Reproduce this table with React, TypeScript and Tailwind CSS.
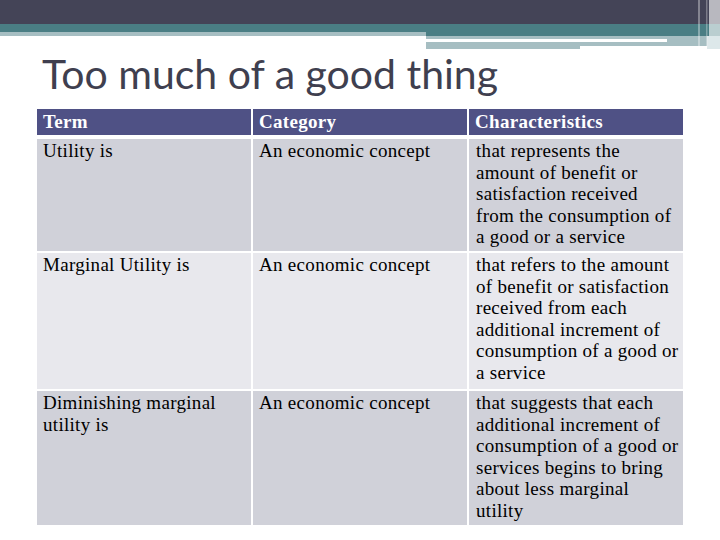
const rows = [
  {
    term: "Utility is",
    category: "An economic concept",
    lines: [
      "that represents the",
      "amount of benefit or",
      "satisfaction received",
      "from the consumption of",
      "a good or a service",
    ],
    bg: "bg-[#d0d1d9]",
    h: "h-[112px]",
  },
  {
    term: "Marginal Utility is",
    category: "An economic concept",
    lines: [
      "that refers to the amount",
      "of benefit or satisfaction",
      "received from each",
      "additional increment of",
      "consumption of a good or",
      "a service",
    ],
    bg: "bg-[#e8e8ed]",
    h: "h-[136px]",
  },
  {
    term: (
      <>
        Diminishing marginal
        <br />
        utility is
      </>
    ),
    category: "An economic concept",
    lines: [
      "that suggests that each",
      "additional increment of",
      "consumption of a good or",
      "services begins to bring",
      "about less marginal",
      "utility",
    ],
    bg: "bg-[#d0d1d9]",
    h: "h-[134px]",
  },
];

function Banner() {
  return (
    <svg width="720" height="50" viewBox="0 0 720 50" className="block">
      <rect x="0" y="0" width="720" height="24" fill="#444457" />
      <rect x="0" y="24" width="720" height="8" fill="#4a7e84" />
      <rect x="0" y="32" width="426" height="4" fill="#a6bec2" />
      <rect x="426" y="32" width="294" height="4" fill="#4a7e84" />
      <rect x="426" y="36" width="294" height="13" fill="#a6bec2" />
      <rect x="426" y="39" width="241" height="3" fill="#ffffff" />
      <rect x="580" y="46" width="127" height="4" fill="#ffffff" />
      <rect x="707" y="36" width="13" height="13" fill="#dde8ea" />
      <rect x="698" y="0" width="2" height="47" fill="#ffffff" opacity="0.35" />
      <rect x="706" y="0" width="1.5" height="47" fill="#ffffff" opacity="0.3" />
      <rect x="709" y="0" width="11" height="36" fill="#ffffff" opacity="0.62" />
    </svg>
  );
}

export default function App() {
  return (
    <div className="w-[720px] h-[540px] bg-white overflow-hidden">
      <Banner />

      {/* Title */}
      <h1 className="mt-[3px] pl-[42px] text-[41px] leading-[42px] text-[#3f3f4f] font-['Lato',sans-serif] font-normal">
        Too much of a good thing
      </h1>

      {/* Table */}
      <div className="mt-[14px] ml-[37px] w-[646px] font-['Liberation_Serif',serif] text-[19px] leading-[21.6px] tracking-[0.3px] text-black">
        <div className="grid grid-cols-3 gap-x-[2px] h-[26px] text-white font-bold">
          <div className="bg-[#4f5185] pl-[6px] pt-[2px]">Term</div>
          <div className="bg-[#4f5185] pl-[6px] pt-[2px]">Category</div>
          <div className="bg-[#4f5185] pl-[6px] pt-[2px]">Characteristics</div>
        </div>
        <div className="mt-[4px] flex flex-col gap-y-[2px]">
          {rows.map((r, i) => (
            <div key={i} className={`grid grid-cols-3 gap-x-[2px] ${r.h}`}>
              <div className={`${r.bg} pl-[6px] pt-[1px]`}>{r.term}</div>
              <div className={`${r.bg} pl-[6px] pt-[1px]`}>{r.category}</div>
              <div className={`${r.bg} pl-[7px] pt-[1px] whitespace-nowrap`}>
                {r.lines.map((l, j) => (
                  <div key={j}>{l}</div>
                ))}
              </div>
            </div>
          ))}
        </div>
      </div>
    </div>
  );
}
